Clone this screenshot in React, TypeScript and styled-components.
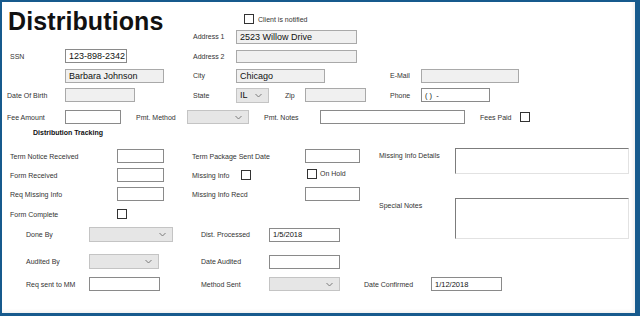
import styled, { createGlobalStyle } from 'styled-components';

const GlobalStyle = createGlobalStyle`
  html, body {
    margin: 0;
    padding: 0;
    background: #ffffff;
  }
  * {
    box-sizing: border-box;
  }
`;

const Chevron = () => (
  <svg width="7" height="5" viewBox="0 0 7 5">
    <polyline points="0.5,1 3.5,4 6.5,1" fill="none" stroke="#7a7a7a" strokeWidth="1" />
  </svg>
);

const App = () => {
  return (
    <>
      <GlobalStyle />
      <Frame>
        <TopGrid>
          <Title>Distributions</Title>
          <Cell />
          <NotifyCheck>
            <Check />
            <Label>Client is notified</Label>
          </NotifyCheck>
          <Cell />
          <Cell />

          <Label>Address 1</Label>
          <Box $w={121} $fill>2523 Willow Drive</Box>
          <Cell />
          <Cell />

          <SsnLabel>SSN</SsnLabel>
          <Box $w={62}>123-898-2342</Box>
          <Label>Address 2</Label>
          <Box $w={121} $h={13} $fill />
          <Cell />
          <Cell />

          <Cell />
          <Box $w={99} $fill>Barbara Johnson</Box>
          <Label>City</Label>
          <Box $w={89} $fill>Chicago</Box>
          <Label>E-Mail</Label>
          <Box $w={98} $fill />

          <Label>Date Of Birth</Label>
          <Box $w={70} $fill />
          <Label>State</Label>
          <Inline>
            <Select $w={33} $h={15}>
              IL
              <Chevron />
            </Select>
            <ZipLabel>Zip</ZipLabel>
            <Box $w={61} $fill />
          </Inline>
          <Label>Phone</Label>
          <Box $w={69} $small>( )&nbsp;&nbsp;-</Box>
        </TopGrid>

        <FeeRow>
          <Label $w={58}>Fee Amount</Label>
          <Box $w={56} />
          <Label $w={51}>Pmt. Method</Label>
          <Select $w={62}>
            <Chevron />
          </Select>
          <Label $w={56}>Pmt. Notes</Label>
          <Box $w={145} />
          <Label $w={40}>Fees Paid</Label>
          <Check />
        </FeeRow>

        <SectionTitle>Distribution Tracking</SectionTitle>

        <Tracking>
          <TrackingMain>
            <TrackingGrid>
              <Label>Term Notice Received</Label>
              <Box $w={47} />
              <Label>Term Package Sent Date</Label>
              <Box $w={55} />

              <Label>Form Received</Label>
              <Box $w={47} />
              <MissingInfo>
                <Label $w={49}>Missing Info</Label>
                <Check />
                <HoldCheck>
                  <Check />
                  <Label>On Hold</Label>
                </HoldCheck>
              </MissingInfo>

              <Label>Req Missing Info</Label>
              <Box $w={47} />
              <Label>Missing Info Recd</Label>
              <Box $w={55} />

              <Label>Form Complete</Label>
              <Check />
            </TrackingGrid>

            <BottomGrid $rows="15px 15px">
              <Label>Done By</Label>
              <Select $w={84} $h={15}>
                <Chevron />
              </Select>
              <Label>Dist. Processed</Label>
              <Box $w={71} $small>1/5/2018</Box>
              <Cell />
              <Cell />

              <Label>Audited By</Label>
              <Select $w={70} $h={15}>
                <Chevron />
              </Select>
              <Label>Date Audited</Label>
              <Box $w={71} />
              <Cell />
              <Cell />
            </BottomGrid>
          </TrackingMain>

          <NotesGrid>
            <Label>Missing Info Details</Label>
            <NoteArea />
            <Label>Special Notes</Label>
            <NoteArea />
          </NotesGrid>
        </Tracking>

        <BottomGrid $rows="16px" $last>
          <Label>Req sent to MM</Label>
          <Box $w={71} />
          <Label>Method Sent</Label>
          <Select $w={71}>
            <Chevron />
          </Select>
          <Label>Date Confirmed</Label>
          <Box $w={71} $small>1/12/2018</Box>
        </BottomGrid>
      </Frame>
    </>
  );
};

export default App;

const Frame = styled.div`
  width: 640px;
  height: 316px;
  background: #ffffff;
  border-style: solid;
  border-color: #175a8d;
  border-width: 2px 5px 3px 2px;
  box-shadow: inset -2px -2px 3px rgba(0, 0, 0, 0.06);
  display: flex;
  flex-direction: column;
  font-family: 'Liberation Sans', Arial, sans-serif;
  color: #2a2a2a;
  overflow: hidden;
`;

const TopGrid = styled.div`
  display: grid;
  grid-template-columns: 58px 128px 43px 154px 31px auto;
  grid-template-rows: 15px 14px 14px 14px 14px;
  row-gap: 5.5px;
  align-items: center;
  justify-items: start;
  padding: 7px 0 0 5px;
`;

const Title = styled.h1`
  grid-column: 1 / 3;
  grid-row: 1 / 3;
  align-self: start;
  margin: 0;
  padding-left: 1px;
  font-size: 25px;
  line-height: 25px;
  font-weight: 700;
  color: #111111;
  letter-spacing: 0.1px;
`;

const Cell = styled.span``;

const Inline = styled.div`
  display: flex;
  align-items: center;
`;

const NotifyCheck = styled(Inline)`
  align-self: end;
  gap: 4px;
  padding-left: 8px;
`;

const MissingInfo = styled(Inline)`
  grid-column: span 2;
`;

const Label = styled.span<{ $w?: number }>`
  flex-shrink: 0;
  ${(p) => (p.$w ? `width: ${p.$w}px;` : '')}
  font-size: 7px;
  line-height: 9px;
  color: #333333;
  white-space: nowrap;
`;

const SsnLabel = styled(Label)`
  padding-left: 3px;
`;

const ZipLabel = styled(Label)`
  width: 20px;
  margin-left: 16px;
`;

const HoldCheck = styled.div`
  display: flex;
  align-items: center;
  gap: 3px;
  margin: -3px 0 0 56px;
`;

const SectionTitle = styled.div`
  margin-top: 4px;
  padding-left: 31px;
  height: 10px;
  font-size: 7px;
  line-height: 10px;
  font-weight: 700;
  color: #111111;
`;

const Box = styled.div<{ $w: number; $h?: number; $fill?: boolean; $small?: boolean }>`
  flex-shrink: 0;
  display: flex;
  align-items: center;
  width: ${(p) => p.$w}px;
  height: ${(p) => p.$h ?? 14}px;
  padding-left: 3px;
  background: ${(p) => (p.$fill ? '#f0f0f0' : '#ffffff')};
  border: 1px solid ${(p) => (p.$fill ? '#a9a9a9' : '#8a8a8a')};
  font-size: ${(p) => (p.$small ? 7.5 : 9)}px;
  color: #111111;
  white-space: nowrap;
  overflow: hidden;
`;

const Select = styled.div<{ $w: number; $h?: number }>`
  flex-shrink: 0;
  display: flex;
  align-items: center;
  width: ${(p) => p.$w}px;
  height: ${(p) => p.$h ?? 14}px;
  padding: 0 6px 0 3px;
  background: #e6e6e6;
  border: 1px solid #c4c4c4;
  font-size: 9px;
  color: #111111;

  svg {
    margin-left: auto;
  }
`;

const Check = styled.span`
  flex-shrink: 0;
  display: inline-block;
  width: 10px;
  height: 10px;
  background: #ffffff;
  border: 1px solid #333333;
`;

const FeeRow = styled.div`
  display: flex;
  align-items: center;
  gap: 15px;
  height: 14px;
  margin-top: 8px;
  padding-left: 5px;

  & > span:nth-child(odd) {
    margin-right: -15px;
  }
`;

const Tracking = styled.div`
  display: flex;
  flex-shrink: 0;
`;

const TrackingMain = styled.div`
  width: 368px;
  display: flex;
  flex-direction: column;
`;

const TrackingGrid = styled.div`
  display: grid;
  grid-template-columns: 107px 75px 113px 55px;
  grid-template-rows: 14px 14px 14px 13px;
  row-gap: 5px;
  align-items: center;
  justify-items: start;
  padding: 11px 0 0 8px;

  & > :nth-last-child(-n + 2) {
    align-self: end;
  }
`;

const BottomGrid = styled.div<{ $rows: string; $last?: boolean }>`
  display: grid;
  grid-template-columns: 63px 112px 68px 95px 67px 71px;
  grid-template-rows: ${(p) => p.$rows};
  row-gap: 12px;
  align-items: center;
  justify-items: start;
  margin-top: ${(p) => (p.$last ? 7 : 8)}px;
  padding-left: 24px;
`;

const NotesGrid = styled.div`
  display: grid;
  grid-template-columns: 76px 174px;
  grid-template-rows: 26px 41px;
  row-gap: 24px;
  align-items: start;
  padding: 10px 0 0 9px;

  & > span {
    padding-top: 3px;
  }
`;

const NoteArea = styled.div`
  width: 174px;
  height: 100%;
  background: #ffffff;
  border-style: solid;
  border-width: 1px;
  border-color: #7c7c7c #e2e2e2 #e2e2e2 #7c7c7c;
`;
